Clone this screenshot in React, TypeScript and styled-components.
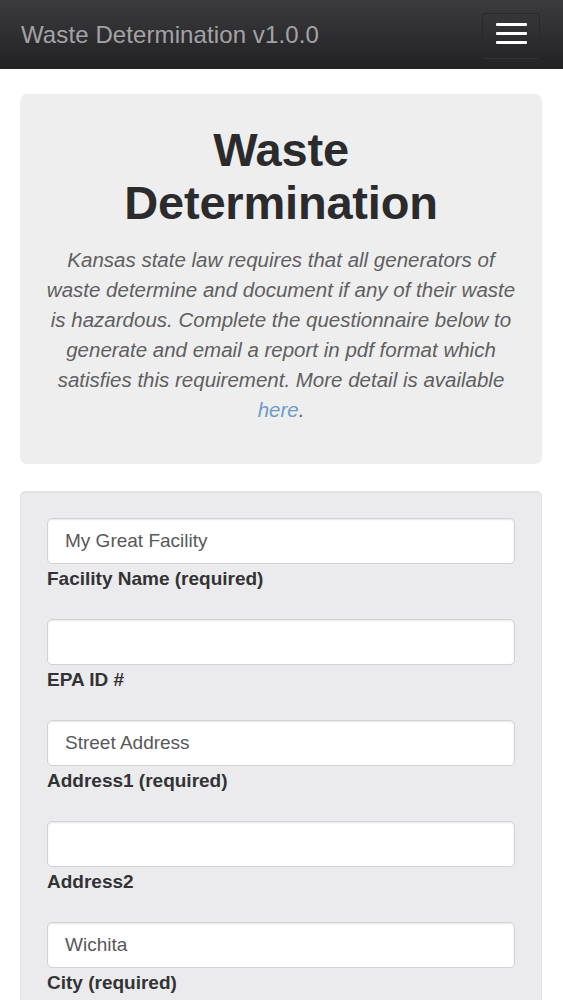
import React from "react";
import styled, { createGlobalStyle } from "styled-components";

const GlobalStyle = createGlobalStyle`
  html, body {
    margin: 0;
    padding: 0;
    background: #ffffff;
    font-family: "Liberation Sans", Arial, Helvetica, sans-serif;
  }
  * { box-sizing: border-box; }
`;

const Page = styled.div`
  width: 563px;
  min-height: 1000px;
  background: #fff;
  overflow: hidden;
`;

const NavBar = styled.header`
  height: 69px;
  background: linear-gradient(to bottom, #3b3b3d 0%, #222224 100%);
  display: flex;
  align-items: center;
  justify-content: space-between;
  padding: 0 23px 0 21px;
`;

const Brand = styled.div`
  font-size: 24px;
  color: #a3a3a5;
  letter-spacing: 0.1px;
  margin-top: 1px;
`;

const Toggle = styled.button`
  width: 58px;
  height: 46px;
  margin-top: 3px;
  border: 1px solid #29292b;
  border-bottom-color: #333335;
  border-radius: 4px;
  background: transparent;
  display: flex;
  flex-direction: column;
  align-items: center;
  justify-content: flex-start;
  gap: 6px;
  padding: 9px 0 0 0;
`;

const Bar = styled.span`
  display: block;
  width: 31px;
  height: 3px;
  background: #ffffff;
  border-radius: 1px;
`;

const Content = styled.main`
  padding: 25px 21px 0 20px;
  display: flex;
  flex-direction: column;
  gap: 27px;
`;

const Jumbotron = styled.section`
  background: #eeeeef;
  border-radius: 7px;
  padding: 29px 26px 39px;
  text-align: center;
`;

const Title = styled.h1`
  margin: 0;
  font-size: 47px;
  line-height: 53px;
  font-weight: 700;
  color: #2b2b2d;
  letter-spacing: -0.2px;
`;

const Lead = styled.p`
  margin: 16px 0 0;
  font-size: 20.5px;
  line-height: 30px;
  font-style: italic;
  font-weight: 300;
  color: #5f5f61;
`;

const Link = styled.a`
  color: #6d9cc9;
  text-decoration: none;
`;

const Well = styled.section`
  background: #ebebed;
  border: 1px solid #e2e2e4;
  border-radius: 5px;
  padding: 26px 26px 40px 26px;
  display: flex;
  flex-direction: column;
  gap: 30px;
  box-shadow: inset 0 1px 1px rgba(0, 0, 0, 0.04);
`;

const Group = styled.div`
  display: flex;
  flex-direction: column;
  gap: 4px;
`;

const Input = styled.input`
  width: 100%;
  height: 46px;
  border: 1px solid #d2d2d4;
  border-radius: 5px;
  background: #fff;
  box-shadow: inset 0 1px 2px rgba(0, 0, 0, 0.1);
  padding: 0 17px;
  font-family: "Liberation Sans", Arial, Helvetica, sans-serif;
  font-size: 19px;
  color: #58585a;
  outline: none;
  &::placeholder { color: #58585a; }
`;

const Label = styled.label`
  font-size: 19px;
  line-height: 21px;
  font-weight: 700;
  color: #333335;
`;

const fields = [
  { label: "Facility Name (required)", value: "My Great Facility" },
  { label: "EPA ID #", value: "" },
  { label: "Address1 (required)", value: "Street Address" },
  { label: "Address2", value: "" },
  { label: "City (required)", value: "Wichita" },
];

export default function App() {
  return (
    <Page>
      <GlobalStyle />
      <NavBar>
        <Brand>Waste Determination v1.0.0</Brand>
        <Toggle aria-label="menu">
          <Bar />
          <Bar />
          <Bar />
        </Toggle>
      </NavBar>
      <Content>
        <Jumbotron>
          <Title>
            Waste
            <br />
            Determination
          </Title>
          <Lead>
            Kansas state law requires that all generators of waste determine and document if any of their waste
            is hazardous. Complete the questionnaire below to generate and email a report in pdf format which
            satisfies this requirement. More detail is available <Link href="#">here</Link>.
          </Lead>
        </Jumbotron>
        <Well>
          {fields.map((f) => (
            <Group key={f.label}>
              <Input defaultValue={f.value} />
              <Label>{f.label}</Label>
            </Group>
          ))}
        </Well>
      </Content>
    </Page>
  );
}
